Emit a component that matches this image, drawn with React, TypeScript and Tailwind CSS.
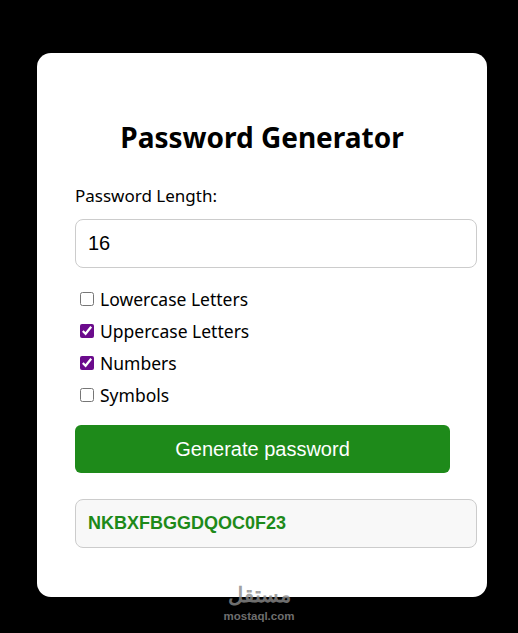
const options = [
  { label: "Lowercase Letters", checked: false },
  { label: "Uppercase Letters", checked: true },
  { label: "Numbers", checked: true },
  { label: "Symbols", checked: false },
];

export default function App() {
  return (
    <div className="relative min-h-[633px] w-full bg-black pt-[53px] font-['Noto_Sans',sans-serif]">
      <div className="ml-[37px] w-[450px] h-[544px] rounded-[14px] bg-white pl-[38px] pr-[10px] pt-[64px]">
        <h1 className="text-center text-[28px] font-bold text-black leading-[40px] pr-[28px]">Password Generator</h1>
        <label className="mt-[27px] block text-[17px] leading-6 text-black">Password Length:</label>
        <input
          type="number"
          defaultValue={16}
          className="mt-[11px] block h-[49px] w-[402px] rounded-lg border border-[#cccccc] px-3 font-['Liberation_Sans',Arial,sans-serif] text-[20px] text-black outline-none"
        />
        <div className="mt-[19px] flex flex-col gap-[8px] pl-[5px]">
          {options.map((o) => (
            <label key={o.label} className="flex h-6 items-center gap-[6px] text-[17.5px] text-black">
              <input type="checkbox" defaultChecked={o.checked} className="h-[14px] w-[14px] accent-[#6b0b8c]" />
              {o.label}
            </label>
          ))}
        </div>
        <button className="mt-[18px] block h-[48px] w-[375px] rounded-md bg-[#1e8a1a] font-['Liberation_Sans',Arial,sans-serif] text-[20px] text-white">
          Generate password
        </button>
        <div className="mt-[26px] flex h-[49px] w-[402px] items-center rounded-lg border border-[#cccccc] bg-[#f8f8f8] px-3 font-['Liberation_Sans',Arial,sans-serif] text-[18px] font-bold text-[#1e8a1a]">
          NKBXFBGGDQOC0F23
        </div>
      </div>
      <div className="pointer-events-none absolute left-0 right-0 top-[580px] flex flex-col items-center text-[#8a8a8a] opacity-80">
        <span className="text-[21px] font-bold leading-[28px] font-['Noto_Sans',sans-serif]">مستقل</span>
        <span className="mt-[2px] text-[11.5px] font-bold leading-[12px] font-['Liberation_Sans',Arial,sans-serif]">mostaql.com</span>
      </div>
    </div>
  );
}
